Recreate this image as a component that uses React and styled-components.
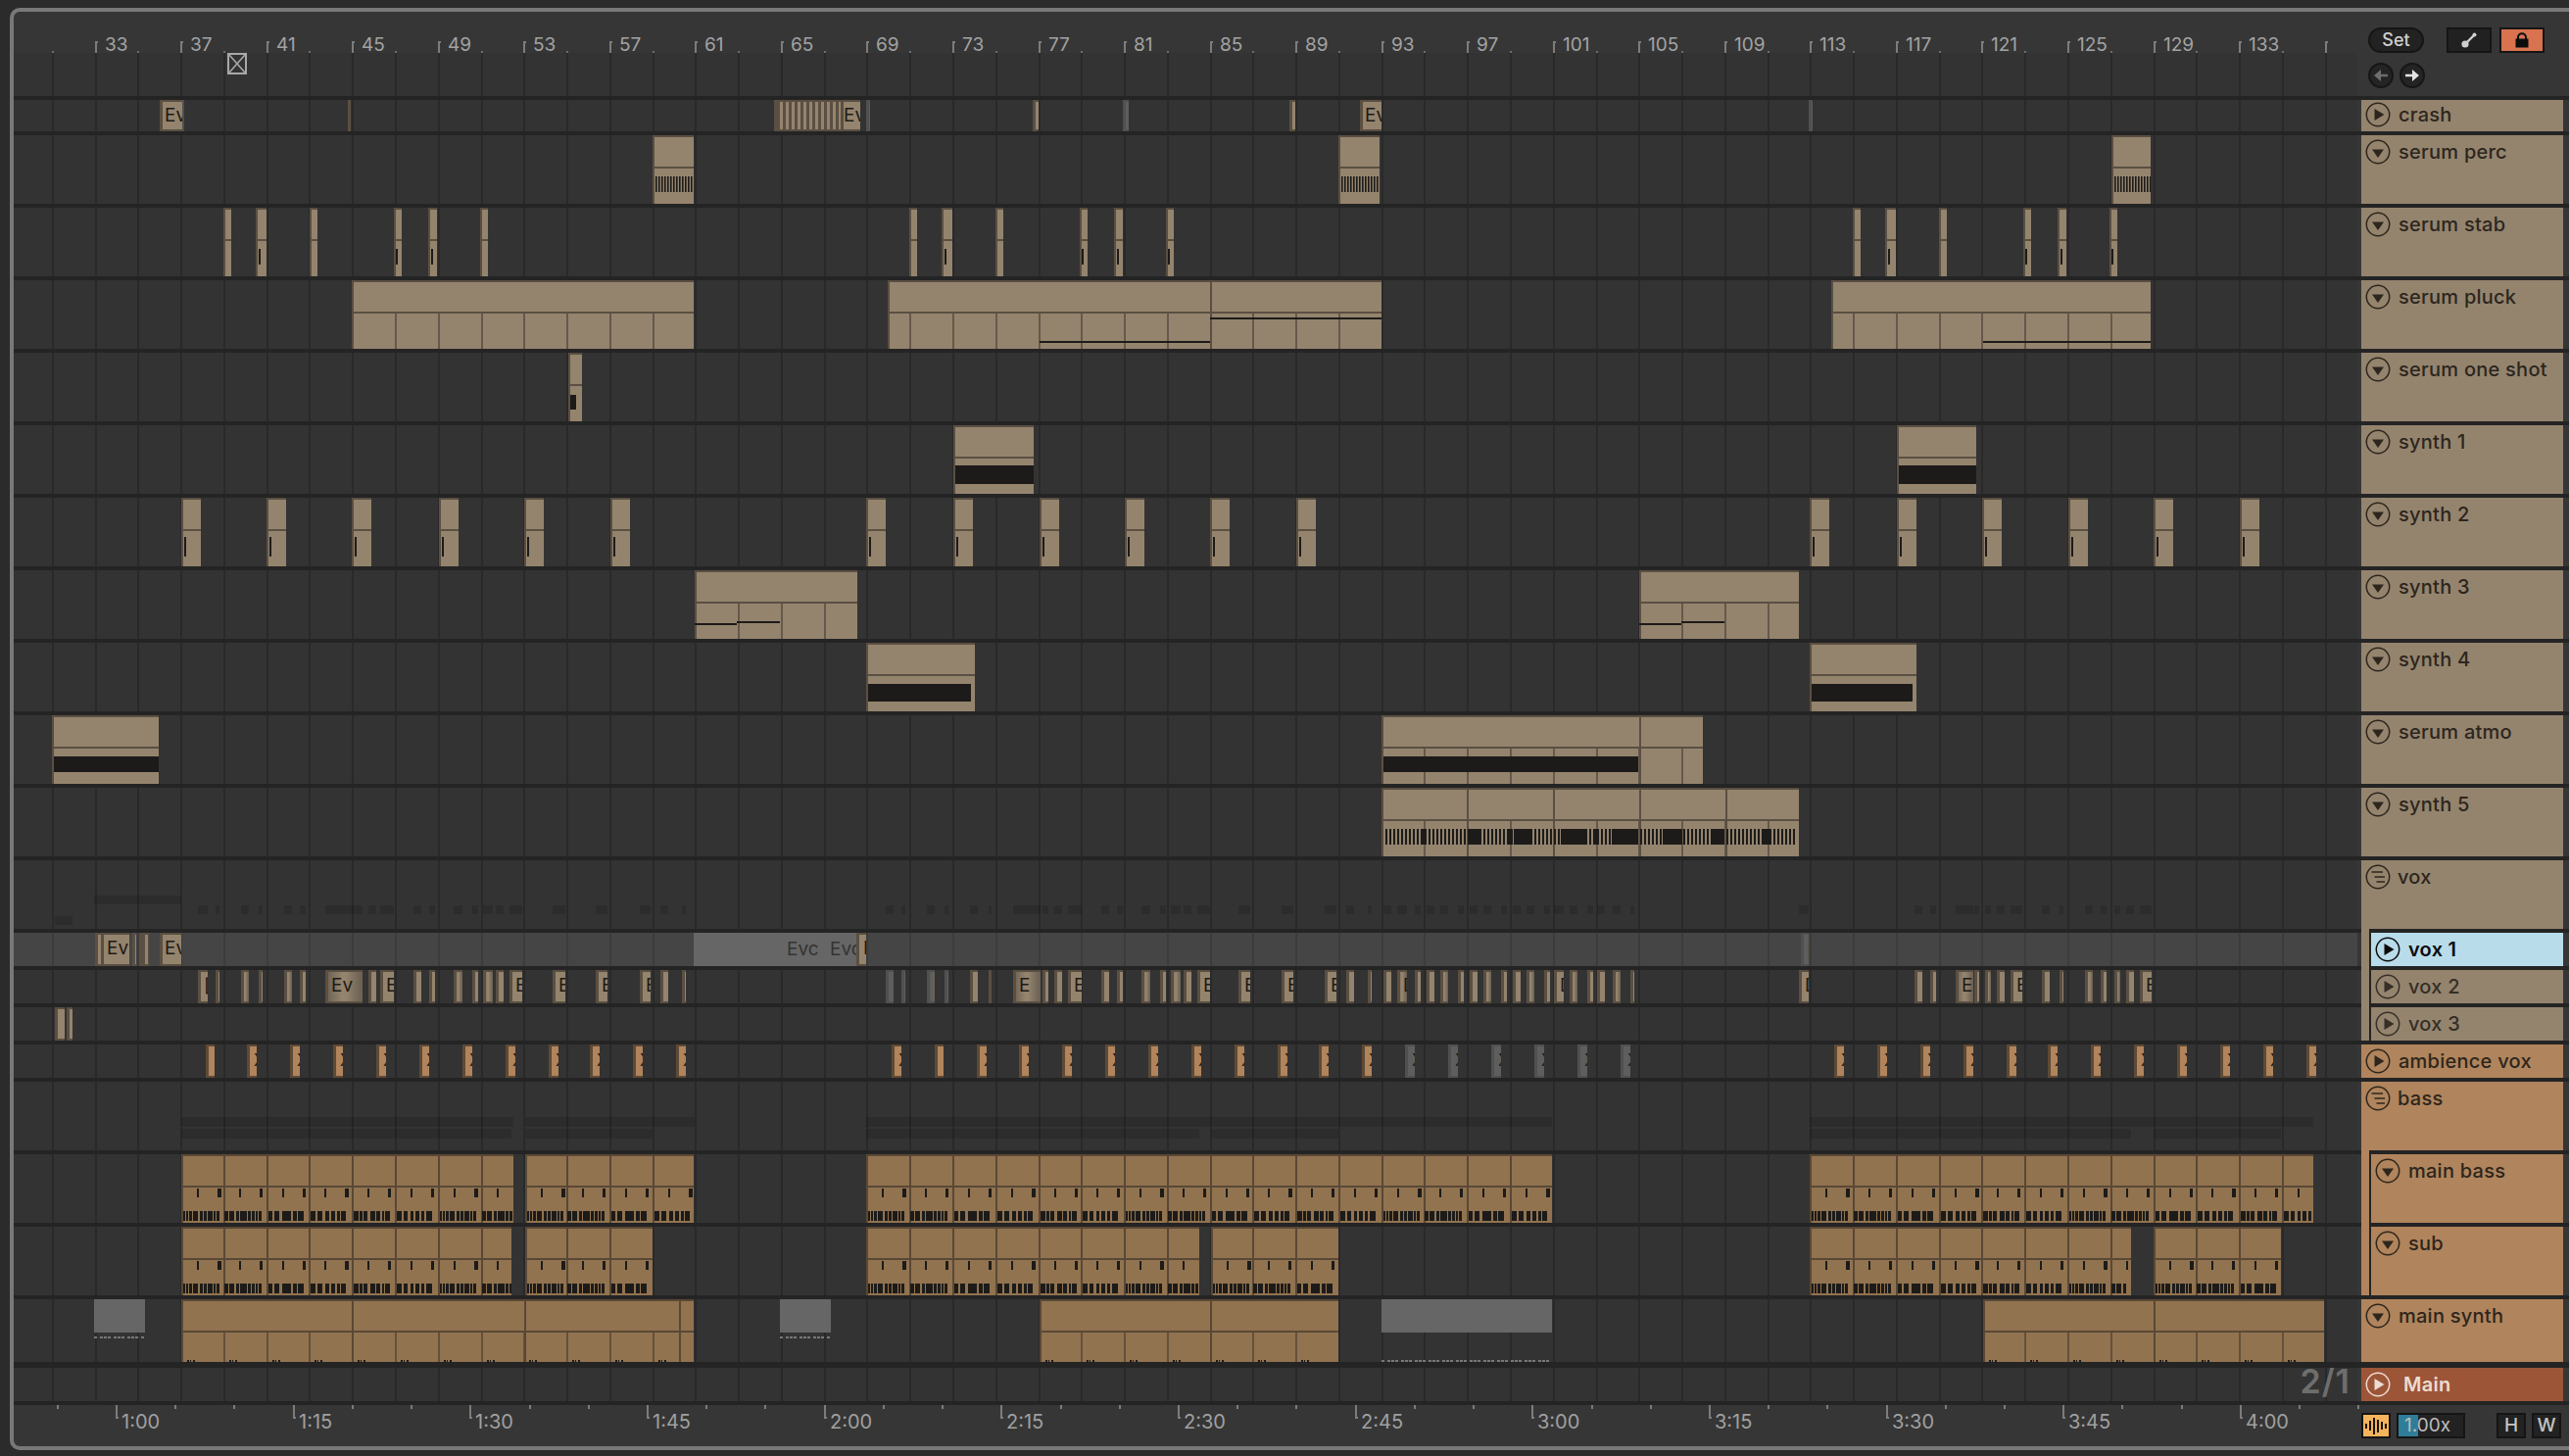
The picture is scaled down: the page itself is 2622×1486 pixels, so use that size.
import React from "react";
import styled, { createGlobalStyle } from "styled-components";

const Global = createGlobalStyle`
  html, body { margin: 0; padding: 0; background: #2b2b2b; }
  body { width: 2622px; height: 1486px; overflow: hidden; font-family: Inter, "Liberation Sans", sans-serif; }
`;

const LANE_W = 2392;
const ORIGIN = 14;
const RULE = "#242424";

const Frame = styled.div`
  position: relative;
  box-sizing: border-box;
  width: 2612px;
  height: 1472px;
  margin: 8px 0 0 10px;
  border: solid #787878;
  border-width: 4px 0 4px 4px;
  border-radius: 10px 0 0 10px;
  background: #363636;
  display: flex;
  flex-direction: column;
`;
const GridLayer = styled.div`
  position: absolute;
  left: 0;
  top: 42px;
  width: ${LANE_W}px;
  height: 1376px;
  background: #333333;
`;
const GridLine = styled.i`
  position: absolute;
  top: 0;
  bottom: 0;
  width: 2px;
  background: #292929;
`;
const TopSection = styled.div`
  position: relative;
  display: flex;
  height: 86px;
  flex: none;
`;
const TopLeft = styled.div`
  width: ${LANE_W}px;
  flex: none;
  display: flex;
  flex-direction: column;
`;
const Ruler = styled.div`
  position: relative;
  height: 42px;
  flex: none;
`;
const BarTick = styled.i`
  position: absolute;
  top: 30px;
  width: 2px;
  height: 12px;
  background: #7c7c7c;
  &::after {
    content: "";
    position: absolute;
    left: 0;
    top: 0;
    width: 3px;
    height: 2px;
    background: #7c7c7c;
  }
`;
const MinorTick = styled.i`
  position: absolute;
  top: 40px;
  width: 2px;
  height: 2px;
  background: #6c6c6c;
`;
const RulerLabel = styled.span`
  position: absolute;
  top: 23px;
  font-size: 19px;
  line-height: 22px;
  color: #a3a3a3;
`;
const TopLane = styled.div`
  position: relative;
  flex: 1;
`;
const Marker = styled.svg`
  position: absolute;
  left: 218px;
  top: 0;
`;
const Controls = styled.div`
  margin-left: 4px;
  padding: 16px 0 0 7px;
  display: flex;
  flex-direction: column;
  gap: 10px;
`;
const ControlRow = styled.div`
  display: flex;
  align-items: center;
  gap: ${(p) => p.$gap || 6}px;
`;
const SetPill = styled.div`
  box-sizing: border-box;
  width: 57px;
  height: 26px;
  border-radius: 13px;
  background: #222;
  border: 2px solid #151515;
  color: #cfcfcf;
  font-size: 18px;
  font-weight: 500;
  line-height: 22px;
  text-align: center;
  margin-right: 15px;
`;
const SquareBtn = styled.div`
  box-sizing: border-box;
  width: 46px;
  height: 26px;
  background: ${(p) => (p.$on ? "#d8724f" : "#212121")};
  border: 2px solid #151515;
  display: flex;
  align-items: center;
  justify-content: center;
`;
const RoundBtn = styled.div`
  box-sizing: border-box;
  width: 26px;
  height: 26px;
  border-radius: 50%;
  background: #242424;
  border: 2px solid #161616;
  display: flex;
  align-items: center;
  justify-content: center;
  color: ${(p) => (p.$dim ? "#6e6e6e" : "#e2e2e2")};
`;

const Row = styled.div`
  display: flex;
  flex: none;
  height: ${(p) => p.$h}px;
  position: relative;
`;
const Lane = styled.div`
  position: relative;
  box-sizing: border-box;
  width: ${LANE_W}px;
  flex: none;
  overflow: hidden;
  background: ${(p) => (p.$selected ? "rgba(255, 255, 255, 0.09)" : "transparent")};
  border-bottom: ${(p) => p.$rule}px solid ${RULE};
`;
const Gutter = styled.div`
  box-sizing: border-box;
  width: 4px;
  flex: none;
  border-bottom: ${(p) => p.$rule}px solid ${RULE};
`;
const RightStub = styled(Gutter)`
  width: 6px;
`;
const tones = { tan: "#94846e", orange: "#b0845c", main: "#9c5537" };
const HeaderCell = styled.div`
  width: 206px;
  flex: none;
  display: flex;
  flex-direction: column;
  background: ${(p) => tones[p.$tone]};
`;
const HeaderBody = styled.div`
  flex: 1;
  display: flex;
  align-items: flex-start;
  gap: ${(p) => (p.$main ? 13 : p.$kind === "group" ? 7 : 8)}px;
  padding: ${(p) => p.$pad}px 0 0 4px;
  margin-left: ${(p) => (p.$nested ? 8 : 0)}px;
  border-left: ${(p) => (p.$nested ? "2px solid #242424" : "0")};
  background: ${(p) => (p.$selected ? "#b8dcea" : "transparent")};
  color: ${(p) => (p.$selected ? "#0c0c0c" : p.$main ? "#ecdcd2" : p.$dim ? "#362f26" : "#2d261d")};
  font-size: 20px;
  font-weight: ${(p) => (p.$selected || p.$main ? 600 : 500)};
  line-height: 26px;
  letter-spacing: 0.25px;
`;
const HeaderRule = styled.div`
  flex: none;
  height: ${(p) => p.$h}px;
  margin-left: ${(p) => (p.$inset ? 8 : 0)}px;
  background: ${RULE};
`;
const TopRule = styled(HeaderRule)`
  position: relative;
`;
const TrackName = styled.span`
  white-space: nowrap;
`;

const clipBg = { tan: "#94846e", orange: "#b0845c", brown: "#917350", gray: "#5e5e5e" };
const clipEdge = { tan: "#5a4f42", orange: "#5e4a36", brown: "#5a4835", gray: "#505050" };
const Clip = styled.div`
  position: absolute;
  top: 0;
  bottom: 0;
  overflow: hidden;
  display: flex;
  flex-direction: column;
  color: #1e1a15;
  background: ${(p) =>
    p.$striped
      ? `repeating-linear-gradient(90deg, ${clipBg[p.$tone]} 0 3px, #5a4f42 3px 6px)`
      : p.$fade
      ? `linear-gradient(90deg, #6d6254 5%, ${clipBg[p.$tone]} 45%, ${clipBg[p.$tone]} 55%, #6d6254 95%)`
      : clipBg[p.$tone]};
  box-shadow: ${(p) =>
    p.$small
      ? `inset 3px 0 0 ${clipEdge[p.$tone]}, inset 0 2px 0 ${clipEdge[p.$tone]}, inset 0 -2px 0 ${clipEdge[p.$tone]}`
      : `inset 2px 2px 0 ${clipEdge[p.$tone]}`};
`;
const ClipTitle = styled.div`
  flex: none;
  height: 30px;
  margin-left: 2px;
  border-top: 2px solid transparent;
  border-bottom: 2px solid ${(p) => clipEdge[p.$tone]};
`;
const ClipLabel = styled.span`
  padding-left: ${(p) => p.$pad ?? 5}px;
  font-size: ${(p) => p.$size || 19}px;
  line-height: ${(p) => p.$lh || 32}px;
  white-space: nowrap;
`;
const ClipSep = styled.i`
  position: absolute;
  top: ${(p) => p.$from}px;
  bottom: 0;
  width: 2px;
  background: ${(p) => clipEdge[p.$tone]};
  opacity: ${(p) => (p.$from ? 0.8 : 1)};
`;
const NoteLayer = styled.svg`
  position: absolute;
  left: 0;
  top: 0;
  fill: ${(p) => p.$fill || "#1d1b19"};
`;
const GhostClip = styled.div`
  position: absolute;
  top: 0;
  bottom: 0;
`;
const GhostTitle = styled.div`
  height: 34px;
  background: #666;
`;
const GhostBar = styled.i`
  position: absolute;
  background: rgba(0, 0, 0, 0.13);
`;
const Selection = styled.div`
  position: absolute;
  top: 0;
  bottom: 0;
  background: #666;
  color: #333;
  font-size: 19px;
  line-height: 34px;
  overflow: hidden;
`;
const SelectionText = styled.span`
  position: absolute;
  top: 0;
  white-space: nowrap;
`;
const Signature = styled.span`
  position: absolute;
  right: 7px;
  top: -6px;
  font-size: 34px;
  font-weight: 600;
  letter-spacing: 1px;
  line-height: 40px;
  color: #6e6e6e;
`;

const BottomRow = styled.div`
  display: flex;
  flex: 1;
`;
const BottomTick = styled.i`
  position: absolute;
  top: 0;
  width: 2px;
  height: ${(p) => (p.$major ? 14 : 4)}px;
  background: ${(p) => (p.$major ? "#7c7c7c" : "#7c7c7c")};
  &::after {
    content: "";
    display: ${(p) => (p.$major ? "block" : "none")};
    position: absolute;
    left: 0;
    bottom: 0;
    width: 3px;
    height: 2px;
    background: #7c7c7c;
  }
`;
const BottomLabel = styled.span`
  position: absolute;
  top: 5px;
  font-size: 20px;
  line-height: 24px;
  color: #a0a0a0;
`;
const BottomRuler = styled.div`
  position: relative;
  width: ${LANE_W + 4}px;
  flex: none;
`;
const BottomControls = styled.div`
  display: flex;
  align-items: flex-start;
  padding-top: 8px;
  gap: 6px;
`;
const WaveBtn = styled.div`
  box-sizing: border-box;
  width: 30px;
  height: 26px;
  background: #f4b45c;
  border: 2px solid #151515;
  display: flex;
  align-items: center;
  justify-content: center;
`;
const Speed = styled.div`
  position: relative;
  box-sizing: border-box;
  width: 70px;
  height: 26px;
  background: #222;
  border: 2px solid #151515;
  color: #bdbdbd;
  font-size: 19px;
  line-height: 22px;
  padding-left: 6px;
  margin-right: 26px;
  overflow: hidden;
`;
const SpeedFill = styled.i`
  position: absolute;
  left: 0;
  top: 0;
  bottom: 0;
  width: 20px;
  background: #2f7d99;
`;
const SpeedText = styled.span`
  position: relative;
`;
const KeyBtn = styled.div`
  box-sizing: border-box;
  width: 30px;
  height: 26px;
  background: #222;
  border: 2px solid #151515;
  color: #c4c4c4;
  font-size: 19px;
  font-weight: 500;
  line-height: 22px;
  text-align: center;
`;

/* ---------- data ---------- */
const GX = (k) => Math.round(96.6 + 43.77 * k);
const gridXs = [];
for (let k = -1; k <= 52; k++) gridXs.push(GX(k));
const sepsIn = (a, b) => gridXs.filter((x) => x > a + 4 && x < b - 3);

const barcode = (a, b, y, h, period = 4, w = 2) => {
  const out = [];
  for (let x = a; x < b; x += period) out.push([x, y, w, h]);
  return out;
};
const big = (a, b, o = {}) => ({ x: a, w: b - a, title: true, lower: true, ...o });
const sm = (a, b, label, o = {}) => ({ x: a, w: b - a, small: true, label, ...o });

const stabNotes = (off) => [
  { x: 228, w: 8 },
  { x: 261, w: 11, n: 264 },
  { x: 316, w: 8 },
  { x: 402, w: 8, n: 404 },
  { x: 437, w: 9, n: 440 },
  { x: 490, w: 8, n: off ? 492 : null },
].map((c) =>
  big(c.x + off, c.x + c.w + off, { lower: false, notes: c.n ? [[c.n + off, 42, 2, 16]] : [] })
);

const synth2 = [185, 272, 359, 448, 535, 623, 884, 973, 1061, 1148, 1235, 1323, 1847, 1936, 2023, 2111, 2198, 2286].map((x) =>
  big(x, x + 20, { lower: false, notes: [[x + 3, 40, 2, 20]] })
);

const synth5Blocks = [[1450, 5], [1498, 14], [1538, 5], [1545, 18], [1593, 27], [1627, 3], [1645, 27], [1697, 20], [1748, 12], [1800, 6]];

const vox2Raw = [
  [202, 212, "[", 0], [220, 224], [246, 254, "", 1], [264, 268], [290, 298, "", 1], [306, 312],
  [332, 370, "Ev", 1], [376, 384], [388, 402, "E"], [422, 430], [438, 444], [463, 472, "", 1], [482, 488],
  [493, 503, "", 1], [506, 514], [520, 533, "E"], [564, 577, "E"], [608, 620, "E"], [653, 664, "E"], [674, 682], [696, 700],
];
const vox2Gray = [[904, 912], [920, 924], [946, 954, "", 1], [964, 968]];
const vox2Second = [
  [990, 998], [1009, 1012], [1034, 1062, "E", 1], [1064, 1070], [1076, 1084], [1090, 1104, "E"], [1124, 1132], [1140, 1146],
  [1165, 1174, "", 1], [1184, 1190], [1195, 1205, "", 1], [1208, 1216], [1222, 1235, "E"], [1264, 1276, "E"], [1308, 1320, "E"],
  [1352, 1364, "E"], [1374, 1382], [1396, 1400], [1412, 1420], [1426, 1436, "D", 1], [1444, 1450], [1456, 1464], [1470, 1478, "", 1],
  [1488, 1494], [1500, 1508], [1514, 1522, "", 1], [1532, 1538], [1544, 1552], [1558, 1566, "", 1], [1576, 1582], [1586, 1596, "D"],
  [1602, 1610, "", 1], [1620, 1626], [1630, 1638], [1646, 1654, "", 1], [1664, 1668],
];
const vox2Third = [
  [1836, 1846, "D"], [1954, 1962], [1970, 1976], [1996, 2014, "E", 1], [2015, 2020], [2026, 2032, "", 1], [2038, 2046], [2052, 2064, "E"],
  [2084, 2092], [2102, 2106], [2128, 2136, "", 1], [2144, 2150], [2158, 2164, "", 1], [2170, 2178], [2184, 2196, "E"],
];
const voxMk = (l, tone = "tan") =>
  l.map(([a, b, t, f]) => sm(a, b, t, { tone, fade: !!f, pad: 6 }));
const vox2Clips = [...voxMk(vox2Raw), ...voxMk(vox2Gray, "gray"), ...voxMk(vox2Second), ...voxMk(vox2Third)];

const voxGhost = [
  [96, 36, 89, 9], [56, 57, 18, 9],
  ...[...vox2Raw, ...vox2Gray, ...vox2Second, ...vox2Third].map(([a, b]) => [a, 46, b - a, 9]),
];

const amb = [210, 252, 296, 340, 384, 428, 472, 516, 560, 602, 646, 690, 910, 954, 997, 1040, 1084, 1128, 1172, 1216, 1260, 1304, 1346, 1390];
const ambGray = [1434, 1478, 1522, 1566, 1610, 1654];
const amb3 = [1872, 1916, 1960, 2004, 2048, 2090, 2134, 2178, 2222, 2266, 2310, 2354];
const ambClip = (tone) => (x) =>
  sm(x, x + (x === 210 || x === 954 ? 9 : 10), x === 210 || x === 954 ? "" : "X", { tone, pad: 7, size: 17 });

const patterns = [
  [[1, 2], [4, 2], [7, 3], [11, 5], [18, 3], [22, 3], [26, 5], [32, 2], [35, 3]],
  [[0, 4], [5, 5], [12, 3], [16, 7], [24, 3], [28, 3], [32, 2], [35, 3]],
  [[1, 4], [7, 5], [15, 9], [26, 4], [31, 6]],
  [[1, 5], [8, 5], [16, 4], [22, 4], [28, 3], [32, 5]],
  [[1, 5], [7, 3], [11, 4], [18, 5], [24, 4], [30, 2], [33, 5]],
  [[1, 5], [8, 4], [15, 3], [20, 4], [26, 3], [31, 6]],
];
const bassNotes = (a, b) => {
  const out = [];
  const starts = [a, ...sepsIn(a, b)];
  starts.forEach((s, i) => {
    const cw = (i + 1 < starts.length ? starts[i + 1] : b) - s;
    if (16 < cw) out.push([s + 16, 35, 2, 9]);
    if (37 < cw) out.push([s + 37, 35, i % 3 === 0 ? 4 : 3, 9]);
    patterns[i % patterns.length].forEach(([o, w]) => {
      if (o + w <= cw) out.push([s + o + 1, 58, w, 10]);
    });
  });
  return out;
};
const bassClip = (a, b, o) => big(a, b, { tone: "brown", lower: false, tseps: sepsIn(a, b), notes: bassNotes(a, b), ...o });

const synthNotes = (a, b) => {
  const out = [];
  [a, ...sepsIn(a, b)].forEach((s) => {
    [[6, 2], [9, 1], [12, 2]].forEach(([o, w]) => out.push([s + o, 62, w, 2]));
  });
  return out;
};
const ghostNotes = (a, b, y) => {
  const out = [];
  for (let x = a, i = 0; x < b - 2; x += i % 3 === 0 ? 6 : 4, i++) out.push([x, y, 3, 2]);
  return out;
};

const tracks = [
  {
    name: "crash", h: 36, pad: 2, icon: "play", tone: "tan",
    clips: [
      sm(163, 186, "Ev"), sm(186, 188, "", { tone: "gray" }), sm(355, 358, ""),
      sm(790, 858, "", { striped: true }), sm(858, 878, "Ev", { pad: 3 }), sm(884, 888, "", { tone: "gray" }),
      sm(1054, 1060, ""), sm(1146, 1152, "", { tone: "gray" }), sm(1316, 1322, ""), sm(1388, 1410, "Ev"),
      sm(1846, 1850, "", { tone: "gray" }),
    ],
  },
  {
    name: "serum perc", icon: "down", tone: "tan",
    clips: [666, 1366, 2155].map((x) =>
      big(x, x + (x === 2155 ? 40 : 42), { lower: false, notes: barcode(x + 3, x + 42, 42, 16, 3, 1.6) })
    ),
  },
  {
    name: "serum stab", icon: "down", tone: "tan",
    clips: [...stabNotes(0), ...stabNotes(700), ...stabNotes(1663)],
  },
  {
    name: "serum pluck", icon: "down", tone: "tan",
    clips: [
      big(359, 708),
      big(906, 1410, { tseps: [1235], notes: [[1061, 62, 174, 2], [1235, 38, 175, 2]] }),
      big(1869, 2195, { notes: [[2024, 62, 171, 2]] }),
    ],
  },
  {
    name: "serum one shot", icon: "down", tone: "tan",
    clips: [big(580, 594, { lower: false, notes: [[582, 43, 6, 15]] })],
  },
  {
    name: "synth 1", icon: "down", tone: "tan",
    clips: [[973, 1055], [1936, 2017]].map(([a, b]) => big(a, b, { lower: false, notes: [[a + 2, 41, b - a - 2, 19]] })),
  },
  { name: "synth 2", icon: "down", tone: "tan", clips: synth2 },
  {
    name: "synth 3", icon: "down", tone: "tan",
    clips: [[709, 875], [1673, 1836]].map(([a, b]) =>
      big(a, b, { notes: [[a, 54, 43, 2], [a + 43, 52, 44, 2]] })
    ),
  },
  {
    name: "synth 4", icon: "down", tone: "tan",
    clips: [[884, 995], [1847, 1956]].map(([a, b]) =>
      big(a, b, { lower: false, notes: [[a + 2, 42, b - a - 6, 18]] })
    ),
  },
  {
    name: "serum atmo", icon: "down", tone: "tan",
    clips: [
      big(53, 162, { lower: false, notes: [[55, 42, 107, 16]] }),
      big(1410, 1738, { tseps: [1673], notes: [[1412, 42, 260, 16]] }),
    ],
  },
  {
    name: "synth 5", icon: "down", tone: "tan",
    clips: [
      big(1410, 1836, {
        tseps: [1497, 1585, 1673, 1761],
        notes: [...barcode(1414, 1834, 42, 16), ...synth5Blocks.map(([x, w]) => [x, 42, w, 16])],
      }),
    ],
  },
  { name: "vox", icon: "group", tone: "tan", insetRule: true, ghosts: voxGhost },
  {
    name: "vox 1", h: 38, icon: "play", tone: "tan", nested: true, selected: true, insetRule: true,
    selection: [708, 874],
    clips: [
      sm(97, 103, ""), sm(103, 132, "Ev", { pad: 6 }), sm(135, 139, ""), sm(142, 152, "", { striped: true }),
      sm(163, 185, "Ev"), sm(874, 884, "E", { pad: 7 }), sm(1838, 1846, "[", { tone: "gray", pad: 6 }),
    ],
  },
  { name: "vox 2", h: 38, icon: "play", tone: "tan", nested: true, insetRule: true, dim: true, clips: vox2Clips },
  {
    name: "vox 3", h: 38, icon: "play", tone: "tan", nested: true, dim: true,
    clips: [sm(56, 66, ""), sm(68, 74, "")],
  },
  {
    name: "ambience vox", h: 38, icon: "play", tone: "orange",
    clips: [...amb.map(ambClip("orange")), ...ambGray.map(ambClip("gray")), ...amb3.map(ambClip("orange"))],
  },
  {
    name: "bass", icon: "group", tone: "orange", insetRule: true,
    ghosts: [
      [185, 36, 339, 10], [185, 48, 337, 10], [536, 36, 173, 10], [536, 48, 130, 10],
      [884, 36, 700, 10], [884, 48, 340, 10], [1236, 48, 130, 10],
      [1847, 36, 514, 10], [1847, 48, 328, 10], [2198, 48, 130, 10],
    ],
  },
  {
    name: "main bass", icon: "down", tone: "orange", nested: true, insetRule: true,
    clips: [bassClip(185, 524), bassClip(536, 708), bassClip(884, 1584), bassClip(1847, 2361)],
  },
  {
    name: "sub", icon: "down", tone: "orange", nested: true,
    clips: [bassClip(185, 522), bassClip(536, 666), bassClip(884, 1224), bassClip(1236, 1366), bassClip(1847, 2175), bassClip(2198, 2328)],
  },
  {
    name: "main synth", h: 70, rule: 6, icon: "down", tone: "orange",
    ghostClips: [
      { x: 96, w: 52, notes: ghostNotes(96, 148, 38) },
      { x: 796, w: 52, notes: ghostNotes(796, 848, 38) },
      { x: 1410, w: 174, notes: ghostNotes(1410, 1584, 62) },
    ],
    clips: [
      big(185, 708, { tone: "brown", tseps: [359, 535, 693], notes: synthNotes(185, 708) }),
      big(1061, 1366, { tone: "brown", tseps: [1235], notes: synthNotes(1061, 1366) }),
      big(2024, 2372, { tone: "brown", tseps: [2198], notes: synthNotes(2024, 2372) }),
    ],
  },
  { name: "Main", h: 38, icon: "play", tone: "main", main: true, signature: "2/1" },
];

/* ---------- drawings ---------- */
const TrackIcon = ({ kind }) => (
  <svg width="26" height="26" viewBox="0 0 26 26" style={{ flex: "none" }}>
    <circle cx="13" cy="13" r="11.7" fill="none" stroke="currentColor" strokeWidth="1.5" />
    {kind === "play" && <path d="M9.5 7 L19.5 13 L9.5 19 Z" fill="currentColor" />}
    {kind === "down" && <path d="M7 10.5 H19 L13 19 Z" fill="currentColor" />}
    {kind === "group" && (
      <path d="M6.5 8 H18 M9.5 13 H20 M11.5 18 H20" fill="none" stroke="currentColor" strokeWidth="1.7" />
    )}
  </svg>
);

const ArrowIcon = ({ right }) => (
  <svg width="16" height="14" viewBox="0 0 16 14" fill="currentColor">
    {right ? <path d="M1 5.7 H8 V1 L15 7 L8 13 V8.3 H1 Z" /> : <path d="M15 5.7 H8 V1 L1 7 L8 13 V8.3 H15 Z" />}
  </svg>
);

const LinkIcon = () => (
  <svg width="18" height="18" viewBox="0 0 18 18">
    <path d="M5 13 L14 4" stroke="#cfcfcf" strokeWidth="2.4" />
    <circle cx="5" cy="13" r="3.6" fill="#cfcfcf" />
    <circle cx="14.5" cy="3.6" r="2" fill="#cfcfcf" />
  </svg>
);

const LockIcon = () => (
  <svg width="16" height="16" viewBox="0 0 16 16">
    <path d="M4 7 V5.3 a4 4 0 0 1 8 0 V7" fill="none" stroke="#0c0c0c" strokeWidth="2" />
    <rect x="1.5" y="6.5" width="13" height="9" fill="#0c0c0c" />
  </svg>
);

const WaveIcon = () => (
  <svg width="22" height="18" viewBox="0 0 22 18" fill="#1b1408">
    <rect x="0" y="7" width="2" height="5" />
    <rect x="4" y="4" width="2" height="10" />
    <rect x="8" y="1" width="2" height="17" />
    <rect x="12" y="3" width="2" height="13" />
    <rect x="16" y="5" width="2" height="8" />
    <rect x="20" y="7" width="2" height="5" />
  </svg>
);

const Notes = ({ clip, fill, height = 70 }) =>
  clip.notes && clip.notes.length ? (
    <NoteLayer $fill={fill} width={clip.w} height={height}>
      {clip.notes.map(([x, y, w, h], i) => (
        <rect key={i} x={x - clip.x} y={y} width={w} height={h} />
      ))}
    </NoteLayer>
  ) : null;

const ClipView = ({ clip, rowTone }) => {
  const tone = clip.tone || rowTone;
  const seps = clip.lower ? sepsIn(clip.x, clip.x + clip.w).filter((s) => !(clip.tseps || []).includes(s)) : [];
  return (
    <Clip $tone={tone} $small={clip.small} $striped={clip.striped} $fade={clip.fade} style={{ left: clip.x - ORIGIN, width: clip.w }}>
      {clip.title && <ClipTitle $tone={tone} />}
      {clip.label ? (
        <ClipLabel $pad={clip.pad} $size={clip.size}>
          {clip.label}
        </ClipLabel>
      ) : null}
      {seps.map((s) => (
        <ClipSep key={s} $tone={tone} $from={32} style={{ left: s - clip.x }} />
      ))}
      {(clip.tseps || []).map((s) => (
        <ClipSep key={s} $tone={tone} $from={0} style={{ left: s - clip.x }} />
      ))}
      <Notes clip={clip} />
    </Clip>
  );
};

const TrackRow = ({ t }) => {
  const rule = t.rule || 4;
  return (
    <Row $h={t.h || 74}>
      <Lane $rule={rule} $selected={t.selected}>
        {t.selection && (
          <Selection style={{ left: t.selection[0] - ORIGIN, width: t.selection[1] - t.selection[0] }}>
            <SelectionText style={{ left: 95 }}>Evc</SelectionText>
            <SelectionText style={{ left: 139 }}>Evc</SelectionText>
          </Selection>
        )}
        {(t.ghosts || []).map(([x, y, w, h], i) => (
          <GhostBar key={i} style={{ left: x - ORIGIN, top: y, width: w, height: h }} />
        ))}
        {(t.ghostClips || []).map((c) => (
          <GhostClip key={c.x} style={{ left: c.x - ORIGIN, width: c.w }}>
            <GhostTitle />
            <Notes clip={c} fill="#777" />
          </GhostClip>
        ))}
        {(t.clips || []).map((c) => (
          <ClipView key={c.x} clip={c} rowTone={t.tone === "orange" ? "orange" : "tan"} />
        ))}
        {t.signature && <Signature>{t.signature}</Signature>}
      </Lane>
      <Gutter $rule={rule} />
      <HeaderCell $tone={t.tone}>
        <HeaderBody
          $nested={t.nested}
          $selected={t.selected}
          $main={t.main}
          $dim={t.dim}
          $kind={t.icon}
          $pad={t.pad ?? 4}
        >
          <TrackIcon kind={t.icon} />
          <TrackName>{t.name}</TrackName>
        </HeaderBody>
        <HeaderRule $h={rule} $inset={t.insetRule} />
      </HeaderCell>
      <RightStub $rule={rule} />
    </Row>
  );
};

const barLabels = [];
for (let n = 33; n <= 133; n += 4) barLabels.push(n);
const topX = (n) => GX((n - 33) / 2) - ORIGIN;
const timeLabels = ["1:00", "1:15", "1:30", "1:45", "2:00", "2:15", "2:30", "2:45", "3:00", "3:15", "3:30", "3:45", "4:00"];

export default function App() {
  const minorTop = [];
  for (let k = -1; k <= 52; k += 2) minorTop.push(GX(k) - ORIGIN);
  const bottomTicks = [];
  for (let i = -1; i < 39; i++) bottomTicks.push({ x: Math.round(118 + 60.22 * i) - ORIGIN, major: i >= 0 && i % 3 === 0 && i / 3 < timeLabels.length, i });
  return (
    <>
      <Global />
      <Frame>
        <GridLayer>
          {gridXs.map((x) => (
            <GridLine key={x} style={{ left: x - ORIGIN }} />
          ))}
        </GridLayer>
        <TopSection>
          <TopLeft>
            <Ruler>
              {barLabels.map((n) => (
                <React.Fragment key={n}>
                  <BarTick style={{ left: topX(n) }} />
                  <RulerLabel style={{ left: topX(n) + 10 }}>{n}</RulerLabel>
                </React.Fragment>
              ))}
              <BarTick style={{ left: topX(137) }} />
              {minorTop.map((x) => (
                <MinorTick key={x} style={{ left: x }} />
              ))}
            </Ruler>
            <TopLane>
              <Marker width="20" height="22" viewBox="0 0 20 22">
                <rect x="1" y="1" width="18" height="20" fill="none" stroke="#a8a8a8" strokeWidth="2" />
                <path d="M2 2 L18 20 M18 2 L2 20" fill="none" stroke="#a8a8a8" strokeWidth="1.6" />
              </Marker>
            </TopLane>
          </TopLeft>
          <Controls>
            <ControlRow $gap={8}>
              <SetPill>Set</SetPill>
              <SquareBtn>
                <LinkIcon />
              </SquareBtn>
              <SquareBtn $on>
                <LockIcon />
              </SquareBtn>
            </ControlRow>
            <ControlRow>
              <RoundBtn $dim>
                <ArrowIcon />
              </RoundBtn>
              <RoundBtn>
                <ArrowIcon right />
              </RoundBtn>
            </ControlRow>
          </Controls>
        </TopSection>
        <TopRule $h={4} />
        {tracks.map((t) => (
          <TrackRow key={t.name} t={t} />
        ))}
        <BottomRow>
          <BottomRuler>
            {bottomTicks.map((b) => (
              <React.Fragment key={b.i}>
                <BottomTick style={{ left: b.x }} $major={b.major} />
                {b.major && <BottomLabel style={{ left: b.x + 6 }}>{timeLabels[b.i / 3]}</BottomLabel>}
              </React.Fragment>
            ))}
          </BottomRuler>
          <BottomControls>
            <WaveBtn>
              <WaveIcon />
            </WaveBtn>
            <Speed>
              <SpeedFill />
              <SpeedText>1.00x</SpeedText>
            </Speed>
            <KeyBtn>H</KeyBtn>
            <KeyBtn>W</KeyBtn>
          </BottomControls>
        </BottomRow>
      </Frame>
    </>
  );
}
